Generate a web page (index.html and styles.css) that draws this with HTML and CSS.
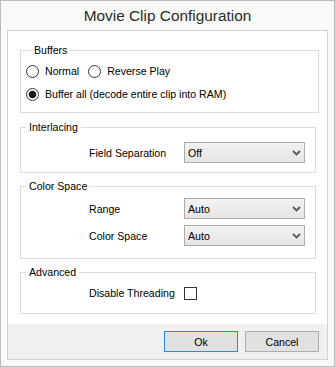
FILE: index.html
```html
<!DOCTYPE html>
<html lang="en">
<head>
    <meta charset="UTF-8">
    <meta name="viewport" content="width=device-width, initial-scale=1.0">
    <title>Movie Clip Configuration</title>
    <link rel="stylesheet" href="styles.css">
</head>
<body>
    <div class="window">
        <div class="title">Movie Clip Configuration</div>
        <div class="panel">
            <div class="panel-body">
                <fieldset class="group buffers">
                    <legend>Buffers</legend>
                    <div class="radio-row">
                        <label class="radio"><input type="radio" name="buffer"> Normal</label>
                        <label class="radio"><input type="radio" name="buffer"> Reverse Play</label>
                    </div>
                    <div class="radio-row second">
                        <label class="radio"><input type="radio" name="buffer" checked> Buffer all (decode entire clip into RAM)</label>
                    </div>
                </fieldset>

                <fieldset class="group interlacing">
                    <legend>Interlacing</legend>
                    <div class="field">
                        <label for="fieldSeparation">Field Separation</label>
                        <div class="select-wrap">
                            <select id="fieldSeparation">
                                <option>Off</option>
                                <option>Top Field First</option>
                                <option>Bottom Field First</option>
                            </select>
                            <svg class="chevron" width="9" height="6" viewBox="0 0 9 6"><path d="M1 1 L4.5 4.5 L8 1" fill="none" stroke="#5a5a5a" stroke-width="1.8"/></svg>
                        </div>
                    </div>
                </fieldset>

                <fieldset class="group colorspace">
                    <legend>Color Space</legend>
                    <div class="field">
                        <label for="range">Range</label>
                        <div class="select-wrap">
                            <select id="range">
                                <option>Auto</option>
                                <option>Limited</option>
                                <option>Full</option>
                            </select>
                            <svg class="chevron" width="9" height="6" viewBox="0 0 9 6"><path d="M1 1 L4.5 4.5 L8 1" fill="none" stroke="#5a5a5a" stroke-width="1.8"/></svg>
                        </div>
                    </div>
                    <div class="field next">
                        <label for="colorSpace">Color Space</label>
                        <div class="select-wrap">
                            <select id="colorSpace">
                                <option>Auto</option>
                                <option>BT.601</option>
                                <option>BT.709</option>
                            </select>
                            <svg class="chevron" width="9" height="6" viewBox="0 0 9 6"><path d="M1 1 L4.5 4.5 L8 1" fill="none" stroke="#5a5a5a" stroke-width="1.8"/></svg>
                        </div>
                    </div>
                </fieldset>

                <fieldset class="group advanced">
                    <legend>Advanced</legend>
                    <div class="field check">
                        <label for="disableThreading">Disable Threading</label>
                        <input type="checkbox" id="disableThreading">
                    </div>
                </fieldset>
            </div>
            <div class="footer">
                <button class="btn default">Ok</button>
                <button class="btn">Cancel</button>
            </div>
        </div>
    </div>
</body>
</html>
```
FILE: styles.css
```css
body {
    margin: 0;
    font-family: "Liberation Sans", Arial, sans-serif;
    font-size: 10.6px;
    color: #000;
}
.window {
    width: 335px;
    height: 367px;
    box-sizing: border-box;
    border: 1px solid #bcbcbc;
    background-color: #f9f9f9;
    padding: 0 6px 6px 6px;
    display: flex;
    flex-direction: column;
}
.title {
    height: 29px;
    line-height: 29px;
    text-align: center;
    font-size: 15.4px;
    color: #2b2b2b;
}
.panel {
    flex: 1;
    border: 1px solid #d2d2d2;
    background-color: #fff;
    display: flex;
    flex-direction: column;
}
.panel-body {
    padding: 12px 8px 0 12px;
}
.group {
    margin: 0 3px 0 0;
    padding: 0;
    border: 1px solid #dcdcdc;
    min-width: 0;
}
.group legend {
    margin-left: 5px;
    padding: 0 3px;
    line-height: 14px;
}
.buffers {
    margin-right: 0;
    padding: 6px 0 10px 5px;
}
.interlacing {
    margin-top: 7px;
    padding: 8px 0 9px 0;
}
.colorspace {
    margin-top: 6px;
    padding: 5px 0 12px 0;
}
.advanced {
    margin-top: 6px;
    padding: 6px 0 12px 0;
}
.radio-row {
    display: flex;
    gap: 9px;
    height: 16px;
    align-items: center;
}
.radio-row.second {
    margin-top: 7px;
}
.radio {
    display: inline-flex;
    align-items: center;
}
.radio input {
    appearance: none;
    width: 13px;
    height: 13px;
    margin: 0 6px 0 0;
    border: 1px solid #333;
    border-radius: 50%;
    background: #fff;
}
.radio input:checked {
    background: radial-gradient(circle, #1a1a1a 0 3.4px, #fff 4.2px);
}
.field {
    display: grid;
    grid-template-columns: 95px 121px;
    align-items: center;
    padding-left: 68px;
    height: 21px;
}
.field.next {
    margin-top: 6px;
}
.field.check {
    height: 16px;
}
.select-wrap {
    position: relative;
    height: 21px;
}
.select-wrap select {
    appearance: none;
    width: 121px;
    height: 21px;
    margin: 0;
    padding: 0 0 0 3px;
    border: 1px solid #acacac;
    border-radius: 0;
    background: linear-gradient(#f2f2f2, #e5e5e5);
    font: inherit;
    color: #000;
}
.chevron {
    position: absolute;
    right: 4px;
    top: 8px;
    pointer-events: none;
}
input[type="checkbox"] {
    appearance: none;
    width: 13px;
    height: 13px;
    margin: 0;
    border: 1px solid #333;
    background: #fff;
}
.footer {
    margin-top: auto;
    height: 35px;
    box-sizing: border-box;
    background-color: #f0f0f0;
    padding: 7px 8px 0 0;
    display: flex;
    justify-content: flex-end;
    gap: 7px;
}
.btn {
    width: 74px;
    height: 21px;
    margin: 0;
    padding: 0;
    border: 1px solid #adadad;
    background-color: #e1e1e1;
    font: inherit;
    color: #000;
}
.btn.default {
    border-color: #2b8ae6;
}
```
